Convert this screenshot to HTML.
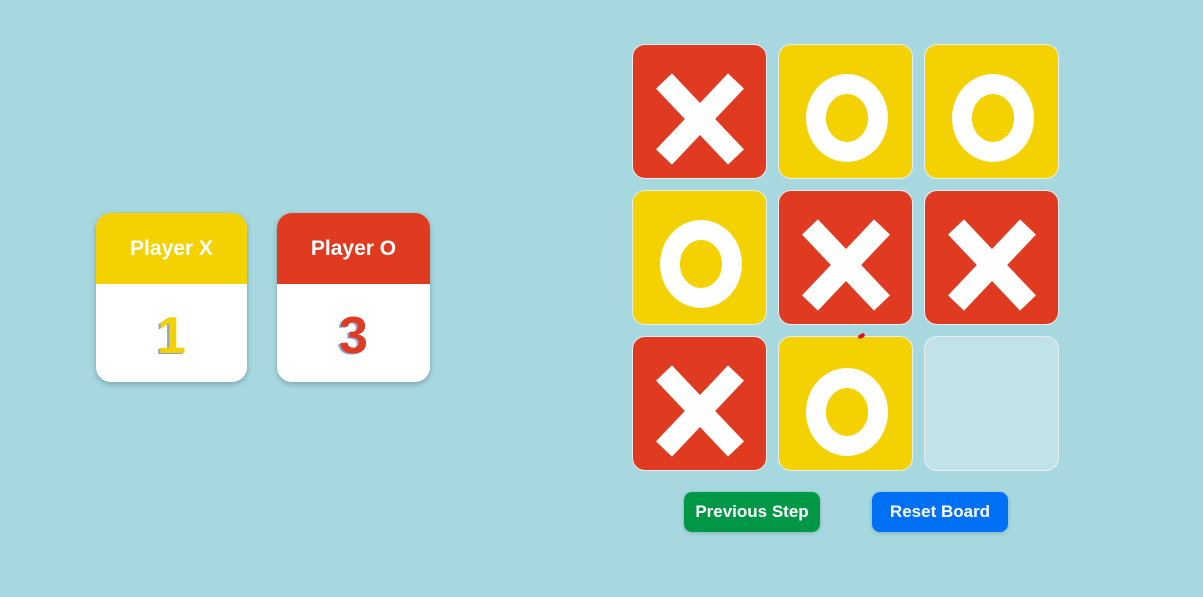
<!DOCTYPE html>
<html><head><meta charset="utf-8"><style>
*{margin:0;padding:0;box-sizing:border-box}
body{width:1203px;height:597px;background:#a7d8e0;position:relative;overflow:hidden;font-family:"Liberation Sans",sans-serif}
.card{position:absolute;top:213px;width:151px;height:169px;border-radius:15px;background:#fff;overflow:hidden;box-shadow:0 2px 6px rgba(0,0,0,.25)}
.card .h{height:71px;color:#fff;font-weight:bold;font-size:21px;text-align:center;line-height:71px}
.card .n{text-align:center;font-size:52px;font-weight:bold;line-height:104px;text-shadow:-2px 1px 0 #8ea0c8}
.cell{position:absolute;width:135px;height:135px;border-radius:13px;border:1px solid #e6eef0}
.r{background:#e03a20}.y{background:#f4d100}.e{background:#c1e3e8}
.cell svg{position:absolute;left:0;top:0}
.btn{position:absolute;top:492px;height:40px;width:136px;border-radius:8px;color:#fff;font-weight:bold;font-size:17px;text-align:center;line-height:40px;box-shadow:0 1px 4px rgba(0,0,0,.2)}
</style></head><body>
<div class="card" style="left:96px"><div class="h" style="background:#f4d100">Player X</div><div class="n" style="color:#f4d100">1</div></div>
<div class="card" style="left:277px;width:153px"><div class="h" style="background:#e03a20">Player O</div><div class="n" style="color:#e03a20">3</div></div>

<div class="cell r" style="left:632px;top:44px"><svg width="135" height="135"><g stroke="#fff" stroke-width="22"><line x1="31" y1="36" x2="103" y2="112"/><line x1="103" y1="36" x2="31" y2="112"/></g></svg></div>
<div class="cell y" style="left:778px;top:44px"><svg width="135" height="135"><ellipse cx="68" cy="73" rx="31" ry="34" fill="none" stroke="#fff" stroke-width="20"/></svg></div>
<div class="cell y" style="left:924px;top:44px"><svg width="135" height="135"><ellipse cx="68" cy="73" rx="31" ry="34" fill="none" stroke="#fff" stroke-width="20"/></svg></div>

<div class="cell y" style="left:632px;top:190px"><svg width="135" height="135"><ellipse cx="68" cy="73" rx="31" ry="34" fill="none" stroke="#fff" stroke-width="20"/></svg></div>
<div class="cell r" style="left:778px;top:190px"><svg width="135" height="135"><g stroke="#fff" stroke-width="22"><line x1="31" y1="36" x2="103" y2="112"/><line x1="103" y1="36" x2="31" y2="112"/></g></svg></div>
<div class="cell r" style="left:924px;top:190px"><svg width="135" height="135"><g stroke="#fff" stroke-width="22"><line x1="31" y1="36" x2="103" y2="112"/><line x1="103" y1="36" x2="31" y2="112"/></g></svg></div>

<div class="cell r" style="left:632px;top:336px"><svg width="135" height="135"><g stroke="#fff" stroke-width="22"><line x1="31" y1="36" x2="103" y2="112"/><line x1="103" y1="36" x2="31" y2="112"/></g></svg></div>
<div class="cell y" style="left:778px;top:336px"><svg width="135" height="135"><ellipse cx="68" cy="75" rx="31" ry="34" fill="none" stroke="#fff" stroke-width="20"/></svg></div>
<div class="cell e" style="left:924px;top:336px"></div>
<div style="position:absolute;left:858px;top:334px;width:7px;height:4px;border-radius:3px;background:#e01020;transform:rotate(-30deg)"></div>

<div class="btn" style="left:684px;background:#009846">Previous Step</div>
<div class="btn" style="left:872px;background:#0070f5">Reset Board</div>
</body></html>
